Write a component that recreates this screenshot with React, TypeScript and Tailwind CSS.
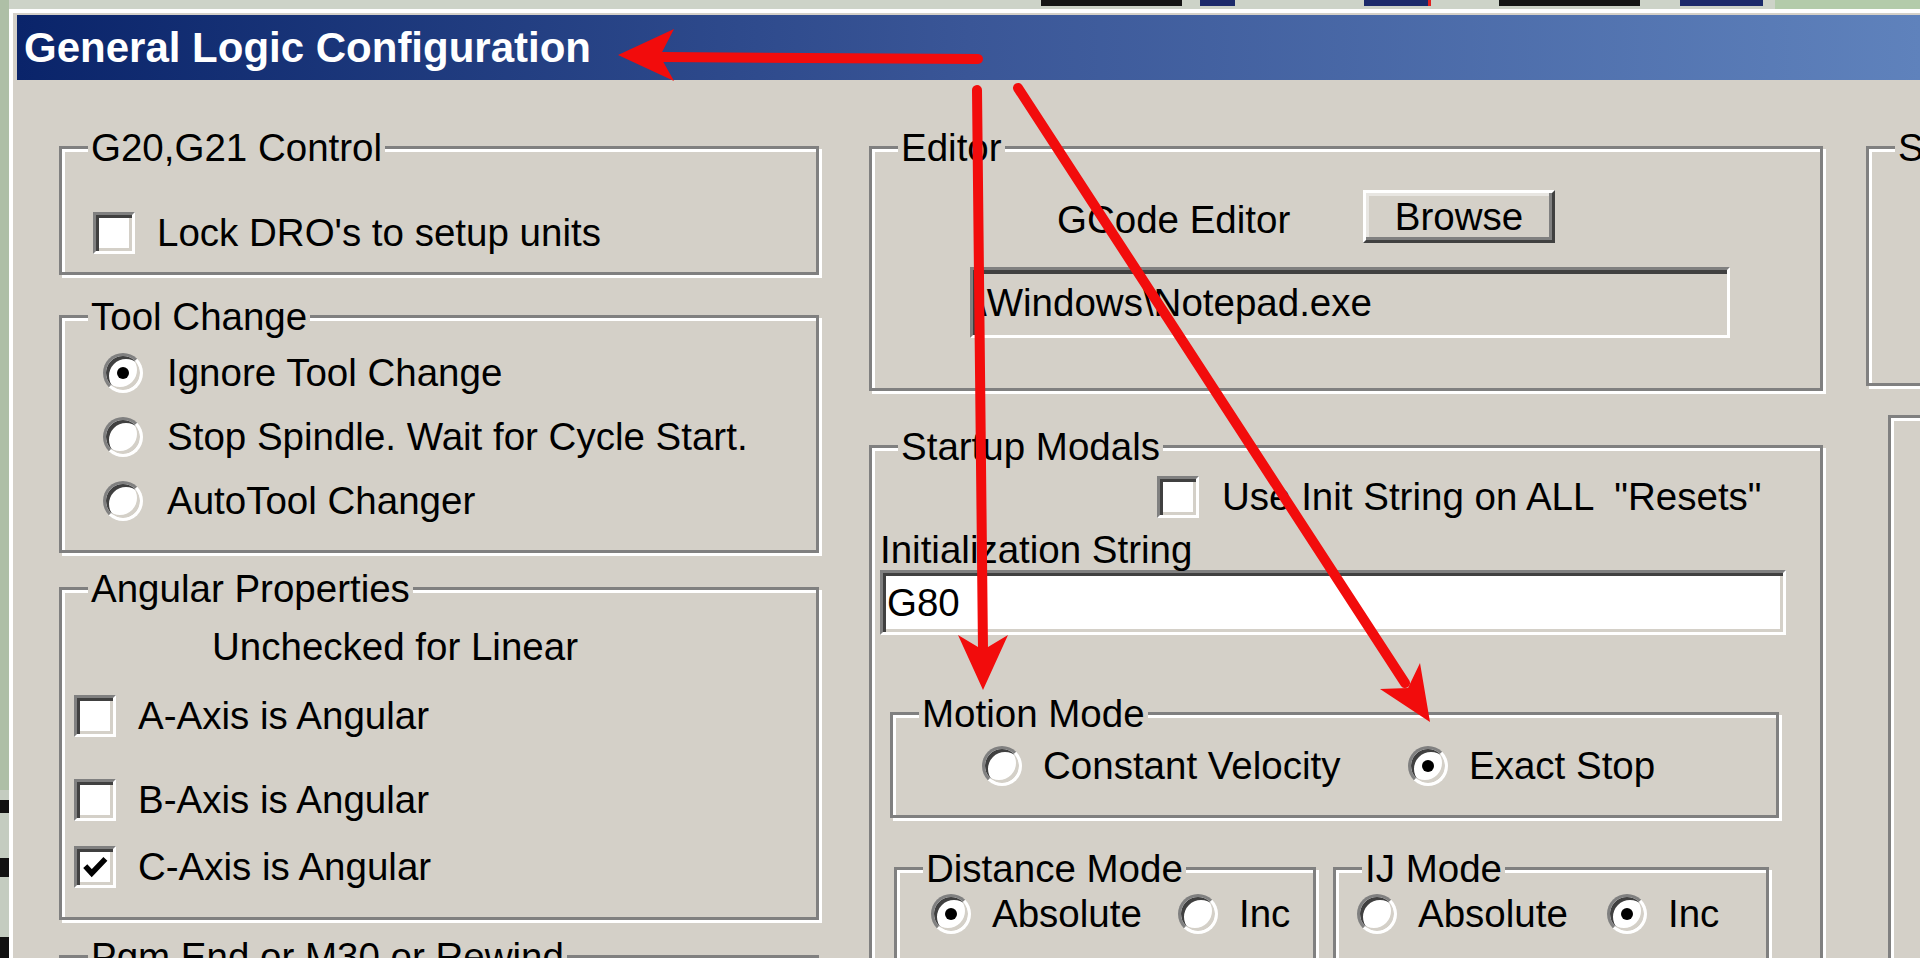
import type { ReactNode } from 'react';

function Group({ label, className = '', children }: { label?: string; className?: string; children?: ReactNode }) {
  return (
    <div className={`relative shrink-0 border-[3px] border-[#808080] shadow-[inset_3px_3px_0_#ffffff,3px_3px_0_#ffffff] ${className}`}>
      {label && (
        <span className="absolute -top-[23px] left-[26px] whitespace-pre bg-[#d4d0c8] px-[3px] leading-[44px]">{label}</span>
      )}
      {children}
    </div>
  );
}

function Check({ checked = false }: { checked?: boolean }) {
  return (
    <span className="flex h-[42px] w-[42px] shrink-0 items-center justify-center border-[3px] border-t-[#808080] border-l-[#808080] border-b-[#ffffff] border-r-[#ffffff] bg-white shadow-[inset_3px_3px_0_#404040,inset_-3px_-3px_0_#d4d0c8]">
      {checked && (
        <svg width="26" height="24" viewBox="0 0 8 7">
          <path d="M1 3.2 L3 5.4 L7.2 1" fill="none" stroke="#000" strokeWidth="1.7" />
        </svg>
      )}
    </span>
  );
}

function Radio({ on = false }: { on?: boolean }) {
  return (
    <span className="flex h-[40px] w-[40px] shrink-0 items-center justify-center rounded-full border-[3px] border-t-[#808080] border-l-[#808080] border-b-[#ffffff] border-r-[#ffffff] bg-white shadow-[inset_3px_3px_0_#404040,inset_-3px_-3px_0_#d4d0c8]">
      {on && <span className="h-[12px] w-[12px] rounded-full bg-black" />}
    </span>
  );
}

function CheckRow({ label, checked, className = '' }: { label: string; checked?: boolean; className?: string }) {
  return (
    <div className={`flex h-[44px] items-center gap-[22px] whitespace-pre ${className}`}>
      <Check checked={checked} />
      <span>{label}</span>
    </div>
  );
}

function RadioItem({ label, on, className = '' }: { label: string; on?: boolean; className?: string }) {
  return (
    <div className={`flex h-[44px] shrink-0 items-center gap-[21px] whitespace-nowrap ${className}`}>
      <Radio on={on} />
      <span>{label}</span>
    </div>
  );
}

// red annotation arrows drawn over the dialog
function Arrows() {
  return (
    <svg className="pointer-events-none absolute left-0 top-0" width="1920" height="958" viewBox="0 0 1920 958">
      <g stroke="#f20c0c" strokeWidth="10" strokeLinecap="round">
        <line x1="662" y1="57" x2="978" y2="59" />
        <line x1="977" y1="90" x2="983" y2="650" />
        <line x1="1018" y1="88" x2="1405" y2="683" />
      </g>
      <g fill="#f20c0c">
        <polygon points="618,55 674,29 660,56 674,81" />
        <polygon points="983,690 958,635 983,650 1008,635" />
        <polygon points="1430,722 1420,663 1408,688 1380,689" />
      </g>
    </svg>
  );
}

export default function App() {
  return (
    <div className="relative flex h-[958px] w-[1920px] overflow-hidden bg-[#d4d0c8] font-['Liberation_Sans',Arial,sans-serif] text-[38.5px] text-black">
      {/* desktop edge on the left */}
      <div className="flex w-[9px] shrink-0 flex-col bg-[#c4ccc0]">
        <div className="h-[790px] bg-[#aebfa6]" />
        <div className="h-[10px]" />
        <div className="h-[13px] bg-[#111]" />
        <div className="h-[45px]" />
        <div className="h-[19px] bg-[#111]" />
        <div className="h-[60px]" />
        <div className="h-[21px] bg-[#111]" />
      </div>

      <div className="flex min-w-0 flex-1 flex-col">
        {/* desktop edge on top */}
        <div className="flex h-[9px] shrink-0 bg-[#cdd3c8]">
          <div className="w-[1032px] shrink-0" />
          <div className="h-[6px] w-[141px] shrink-0 bg-[#151515]" />
          <div className="w-[18px] shrink-0" />
          <div className="h-[6px] w-[35px] shrink-0 bg-[#1b2a6a]" />
          <div className="w-[129px] shrink-0" />
          <div className="h-[6px] w-[64px] shrink-0 bg-[#1b2a6a]" />
          <div className="h-[6px] w-[3px] shrink-0 bg-[#e02020]" />
          <div className="w-[68px] shrink-0" />
          <div className="h-[6px] w-[141px] shrink-0 bg-[#151515]" />
          <div className="w-[40px] shrink-0" />
          <div className="h-[6px] w-[83px] shrink-0 bg-[#1b2a6a]" />
          <div className="w-[12px] shrink-0" />
          <div className="flex-1 bg-[#b3cbaa]" />
        </div>

        {/* dialog */}
        <div className="flex min-h-0 flex-1 flex-col border-l-[4px] border-t-[4px] border-white bg-[#d4d0c8] pl-[4px] pt-[2px]">
          <div className="flex h-[65px] shrink-0 items-center bg-linear-to-r from-[#0a246a] via-[#3a5697] to-[#5f82bc] pl-[7px] text-[42px] font-bold text-white">
            General Logic Configuration
          </div>

          <div className="flex items-start pl-[42px] pt-[66px]">
            {/* left column */}
            <div className="flex w-[760px] shrink-0 flex-col">
              <Group label="G20,G21 Control" className="h-[129px] w-[760px] pl-[31px] pt-[62px]">
                <CheckRow label="Lock DRO's to setup units" />
              </Group>

              <Group label="Tool Change" className="mt-[40px] h-[238px] w-[760px] pl-[41px] pt-[23px]">
                <RadioItem label="Ignore Tool Change" on className="h-[64px] gap-[24px]" />
                <RadioItem label="Stop Spindle. Wait for Cycle Start." className="h-[64px] gap-[24px]" />
                <RadioItem label="AutoTool Changer" className="h-[64px] gap-[24px]" />
              </Group>

              <Group label="Angular Properties" className="mt-[34px] h-[333px] w-[760px] pl-[12px] pt-[35px]">
                <div className="ml-[138px] h-[44px] leading-[44px]">Unchecked for Linear</div>
                <CheckRow label="A-Axis is Angular" className="mt-[25px]" />
                <CheckRow label="B-Axis is Angular" className="mt-[40px]" />
                <CheckRow label="C-Axis is Angular" checked className="mt-[23px]" />
              </Group>

              <Group label="Pgm End or M30 or Rewind" className="mt-[35px] h-[200px] w-[760px]" />
            </div>

            {/* middle column */}
            <div className="ml-[50px] flex w-[954px] shrink-0 flex-col">
              <Group label="Editor" className="h-[245px] w-[954px] pl-[98px] pt-[41px]">
                <div className="ml-[87px] flex h-[53px] items-center">
                  <span className="w-[306px] shrink-0 pt-[6px]">GCode Editor</span>
                  <button className="flex h-[53px] w-[192px] items-center justify-center border-[3px] border-t-[#ffffff] border-l-[#ffffff] border-b-[#404040] border-r-[#404040] bg-[#d4d0c8] shadow-[inset_-3px_-3px_0_#808080,inset_3px_3px_0_#e8e6e2]">
                    Browse
                  </button>
                </div>
                <div className="mt-[24px] flex h-[71px] w-[760px] items-center overflow-hidden whitespace-nowrap border-[3px] border-t-[#808080] border-l-[#808080] border-b-[#ffffff] border-r-[#ffffff] bg-[#d4d0c8] pl-[3px] shadow-[inset_3px_4px_0_#404040,inset_-3px_-3px_0_#d4d0c8]">
                  {'\\Windows\\Notepad.exe'}
                </div>
              </Group>

              <Group label="Startup Modals" className="mt-[54px] h-[700px] w-[954px]">
                <CheckRow label={'Use Init String on ALL  "Resets"'} className="ml-[285px] mt-[27px] gap-[23px]" />
                <div className="ml-[8px] mt-[9px] leading-[44px]">Initialization String</div>
                <div className="-mt-[2px] ml-[8px] flex h-[65px] w-[906px] items-center border-[3px] border-t-[#808080] border-l-[#808080] border-b-[#ffffff] border-r-[#ffffff] bg-white pl-[4px] shadow-[inset_3px_3px_0_#404040,inset_-3px_-3px_0_#d4d0c8]">
                  G80
                </div>

                <Group label="Motion Mode" className="ml-[18px] mt-[77px] h-[106px] w-[889px] pl-[89px] pt-[29px]">
                  <div className="flex">
                    <RadioItem label="Constant Velocity" className="w-[426px]" />
                    <RadioItem label="Exact Stop" on className="gap-[20px]" />
                  </div>
                </Group>

                <div className="ml-[22px] mt-[49px] flex gap-[17px]">
                  <Group label="Distance Mode" className="h-[200px] w-[422px] pl-[34px] pt-[22px]">
                    <div className="flex">
                      <RadioItem label="Absolute" on className="w-[247px] gap-[20px]" />
                      <RadioItem label="Inc" className="gap-[20px]" />
                    </div>
                  </Group>
                  <Group label="IJ Mode" className="h-[200px] w-[436px] pl-[21px] pt-[22px]">
                    <div className="flex">
                      <RadioItem label="Absolute" className="w-[250px] gap-[20px]" />
                      <RadioItem label="Inc" on className="gap-[20px]" />
                    </div>
                  </Group>
                </div>
              </Group>
            </div>

            {/* right column, cut off by the screen edge */}
            <div className="ml-[43px] flex shrink-0 flex-col">
              <Group label="S" className="h-[240px] w-[200px]" />
              <Group className="ml-[22px] mt-[29px] h-[600px] w-[200px]" />
            </div>
          </div>
        </div>
      </div>

      <Arrows />
    </div>
  );
}
